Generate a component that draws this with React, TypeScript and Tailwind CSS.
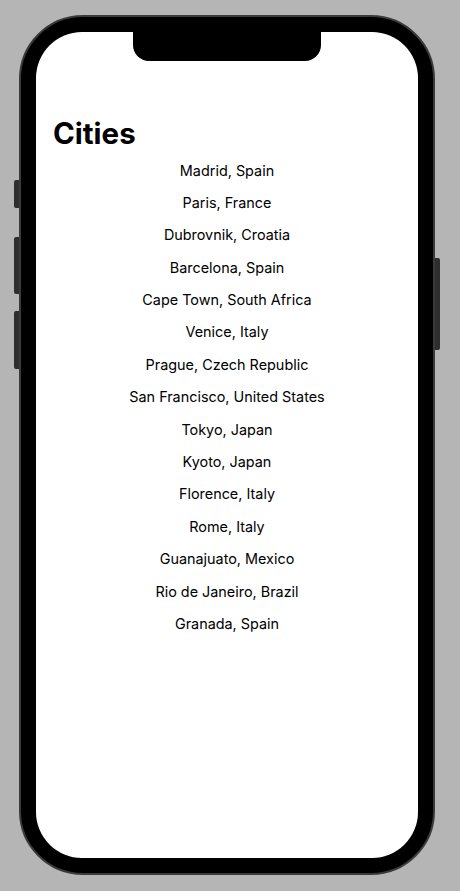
const cities = [
  "Madrid, Spain",
  "Paris, France",
  "Dubrovnik, Croatia",
  "Barcelona, Spain",
  "Cape Town, South Africa",
  "Venice, Italy",
  "Prague, Czech Republic",
  "San Francisco, United States",
  "Tokyo, Japan",
  "Kyoto, Japan",
  "Florence, Italy",
  "Rome, Italy",
  "Guanajuato, Mexico",
  "Rio de Janeiro, Brazil",
  "Granada, Spain",
];

export default function App() {
  return (
    <div className="h-[891px] w-[460px] overflow-hidden bg-[#b5b5b5] pt-[15px] pl-[19px] font-['Inter',sans-serif]">
      <div className="relative h-[860px] w-[416px] rounded-[64px] border-2 border-[#3a3a3a] bg-black p-[15px]">
        {/* side buttons */}
        <div className="absolute -left-[7px] top-[163px] h-[28px] w-[5px] rounded-l-[2px] bg-[#2e2e2e]" />
        <div className="absolute -left-[7px] top-[220px] h-[57px] w-[5px] rounded-l-[2px] bg-[#2e2e2e]" />
        <div className="absolute -left-[7px] top-[294px] h-[58px] w-[5px] rounded-l-[2px] bg-[#2e2e2e]" />
        <div className="absolute -right-[7px] top-[241px] h-[92px] w-[5px] rounded-r-[2px] bg-[#2e2e2e]" />

        <div className="relative h-full w-full overflow-hidden rounded-[46px] bg-white">
          {/* notch */}
          <div className="absolute left-1/2 top-0 h-[29px] w-[188px] -translate-x-1/2 rounded-b-[16px] bg-black" />

          <div className="flex flex-col pt-[83px]">
            <h1 className="pl-[17px] text-[29.5px] font-bold leading-[36px] text-black">Cities</h1>
            <ul className="mt-[3.5px] flex flex-col items-center">
              {cities.map((city) => (
                <li key={city} className="h-[32.4px] text-[14.4px] leading-[32.4px] text-black">
                  {city}
                </li>
              ))}
            </ul>
          </div>
        </div>
      </div>
    </div>
  );
}
